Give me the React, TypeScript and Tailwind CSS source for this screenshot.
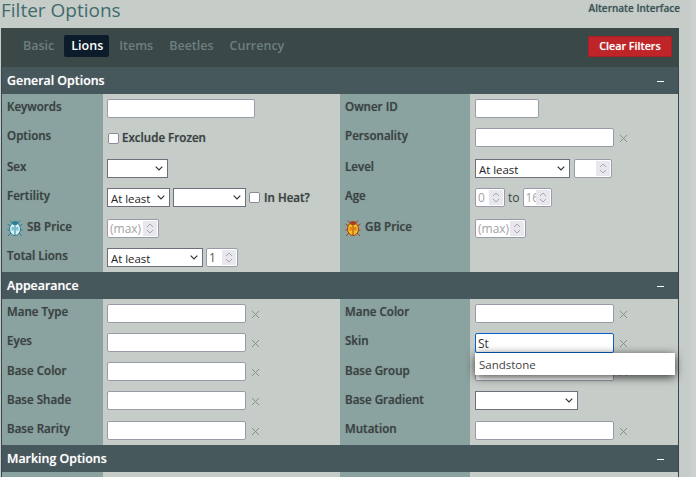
import React from "react";

const inputCls = "block h-[19px] border border-[#9a9aab] rounded-[2px] bg-white text-[12px] px-[2px] outline-none box-border";
const labelText = "text-[11.6px] font-semibold text-[#3a4242] [text-shadow:0_0_1px_rgba(58,66,66,0.55)]";

function Clear() {
  return (
    <svg width="9" height="9" viewBox="0 0 9 9" className="ml-[5px] mt-[6px] shrink-0">
      <path d="M1 1L8 8M8 1L1 8" stroke="#8a8f8d" strokeWidth="1" />
    </svg>
  );
}

function Select({ w, value }: { w: string; value?: string }) {
  return (
    <div className={`relative h-[19px] ${w}`}>
      <select className="block appearance-none w-full h-full border border-[#6e6e7c] bg-white text-[11.4px] text-[#222] pl-[3px] pt-[1px] box-border rounded-none outline-none">
        <option>{value}</option>
      </select>
      <svg width="8" height="5" viewBox="0 0 8 5" className="absolute right-[5px] top-[7px] pointer-events-none">
        <path d="M0.7 0.7L4 4L7.3 0.7" fill="none" stroke="#333" strokeWidth="1.2" />
      </svg>
    </div>
  );
}

function NumberBox({ w, placeholder, value, dark }: { w: string; placeholder?: string; value?: number; dark?: boolean }) {
  return (
    <div className={`relative h-[19px] ${w}`}>
      <input
        type="number"
        placeholder={placeholder}
        defaultValue={value}
        className={`block w-full h-full border border-[#9a9aab] rounded-[2px] bg-white text-[12px] pl-[2px] outline-none box-border placeholder:text-[#a4a4a4] [appearance:textfield] [&::-webkit-inner-spin-button]:appearance-none ${dark ? "text-[#555]" : "text-[#a4a4a4]"}`}
      />
      <span className="absolute right-[2px] top-[2px] bottom-[2px] w-[14px] bg-[#e7e7ed] flex items-center justify-center">
        <svg width="8" height="11" viewBox="0 0 8 11">
          <path d="M1 4L4 1L7 4M1 7L4 10L7 7" fill="none" stroke="#a6a6ae" strokeWidth="1" />
        </svg>
      </span>
    </div>
  );
}

function Check() {
  return <input type="checkbox" className="block m-0 w-[11px] h-[11px] appearance-none bg-white border border-[#8a8a9a] rounded-[2px] shrink-0" />;
}

function Beetle({ body, edge, spot }: { body: string; edge: string; spot: string }) {
  return (
    <svg width="16" height="18" viewBox="0 0 16 18" className="shrink-0 mt-[1px]">
      <g stroke={edge} strokeWidth="1" fill="none">
        <path d="M5 4L3 1.5M11 4L13 1.5M3.5 7L0.5 5M12.5 7L15.5 5M3 11H0.5M13 11H15.5M4 14L1 17M12 14L15 17" />
      </g>
      <ellipse cx="8" cy="10" rx="5.5" ry="6.5" fill={body} stroke={edge} />
      <ellipse cx="8" cy="4" rx="3" ry="2" fill={edge} />
      <path d="M8 4V16.5" stroke={edge} />
      <path d="M4.5 8h2.5v3.5H4.5zM9 8h2.5v3.5H9z" fill={spot} />
    </svg>
  );
}

function Header({ title }: { title: string }) {
  return (
    <div className="h-[27px] bg-[#47585c] flex items-center justify-between pl-[5px] pr-[14px] text-white text-[12.4px] font-semibold [text-shadow:0_0_1px_rgba(255,255,255,0.5)]">
      <span className="mt-px">{title}</span>
      <span className="w-[7px] h-px bg-white mt-[2px]" />
    </div>
  );
}

function Row({ h, a, b, c, d, lab = "pt-[4px]" }: { h: string; a: React.ReactNode; b: React.ReactNode; c?: React.ReactNode; d?: React.ReactNode; lab?: string }) {
  return (
    <div className={`grid grid-cols-[101px_237px_130px_208px] ${h}`}>
      <div className={`bg-[#8ba3a0] pl-[5px] ${lab} leading-[18px] ${labelText} flex items-start gap-[4px]`}>{a}</div>
      <div className="pl-[4px] pt-[5px] flex items-start">{b}</div>
      <div className={`bg-[#8ba3a0] pl-[5px] ${lab} leading-[18px] ${labelText} flex items-start gap-[4px]`}>{c}</div>
      <div className="pl-[5px] pt-[5px] flex items-start">{d}</div>
    </div>
  );
}

const TextWithClear = ({ w = "w-[139px]" }: { w?: string }) => (
  <>
    <input className={`${inputCls} ${w}`} />
    <Clear />
  </>
);

export default function App() {
  return (
    <div className="relative h-[477px] w-[696px] overflow-hidden bg-[#c6ccc8] font-['Open_Sans',sans-serif]">
      <div className="absolute right-0 top-0 bottom-0 w-[5px] bg-[#cdd2cf]" />
      <div className="flex justify-between h-[28px] pl-[1px] pr-[16px]">
        <h1 className="text-[19px] leading-[20px] font-normal text-[#3f6b6e]">Filter Options</h1>
        <a className="text-[10px] font-semibold text-[#3c5458] leading-[17px] [text-shadow:0_0_1px_rgba(60,84,88,0.5)]">Alternate Interface</a>
      </div>
      <div className="ml-[1px] w-[678px] border-l border-r border-[#3a4450] box-border">
        <div className="h-[39px] bg-[#3a4848] -mx-px flex items-center justify-between pl-[17px] pr-[7px]">
          <div className="flex items-center text-[12.5px] font-semibold text-[#6c8080] -mt-[3px]">
            <span className="px-[5px]">Basic</span>
            <span className="ml-[5px] pl-[7px] pr-[6px] h-[22px] leading-[21px] rounded-[2px] bg-[#0c1c2a] text-white">Lions</span>
            <span className="ml-[6px] px-[4px]">Items</span>
            <span className="ml-[8px] px-[4px]">Beetles</span>
            <span className="ml-[8px] px-[4px]">Currency</span>
          </div>
          <button className="w-[84px] h-[21px] -mt-[3px] bg-[#bf2528] border border-[#a82025] text-white text-[10.7px] font-semibold [text-shadow:0_0_1px_rgba(255,255,255,0.5)]">Clear Filters</button>
        </div>
        <Header title="General Options" />
        <Row h="h-[29px]" a="Keywords" b={<input className={`${inputCls} w-[148px]`} />} c="Owner ID" d={<input className={`${inputCls} w-[64px]`} />} />
        <Row
          h="h-[31px]"
          a="Options"
          b={
            <label className={`flex items-center gap-[3px] leading-[18px] ${labelText} mt-[1px] ml-[1px]`}>
              <Check />
              Exclude Frozen
            </label>
          }
          c="Personality"
          d={<TextWithClear />}
        />
        <Row
          h="h-[29px]"
          a="Sex"
          b={<Select w="w-[61px]" />}
          c="Level"
          d={
            <div className="flex gap-[4px]">
              <Select w="w-[95px]" value="At least" />
              <NumberBox w="w-[38px]" />
            </div>
          }
        />
        <Row
          h="h-[31px]"
          a="Fertility"
          b={
            <div className="flex items-center gap-[3px]">
              <Select w="w-[63px]" value="At least" />
              <Select w="w-[73px]" />
              <Check />
              <span className={`${labelText} ml-px`}>In Heat?</span>
            </div>
          }
          c="Age"
          d={
            <div className="flex items-center gap-[3px] text-[12px] text-[#3a4242]">
              <NumberBox w="w-[30px]" value={0} />
              <span>to</span>
              <NumberBox w="w-[29px]" value={16} />
            </div>
          }
        />
        <Row
          h="h-[29px]"
          a={<><Beetle body="#d8eef2" edge="#2a7f98" spot="#7cc4d4" /><span>SB Price</span></>}
          b={<NumberBox w="w-[52px]" placeholder="(max)" />}
          c={<><Beetle body="#f0c020" edge="#a8401c" spot="#e88020" /><span>GB Price</span></>}
          d={<NumberBox w="w-[51px]" placeholder="(max)" />}
        />
        <Row
          h="h-[29px]"
          a="Total Lions"
          b={
            <div className="flex gap-[3px]">
              <Select w="w-[96px]" value="At least" />
              <NumberBox w="w-[32px]" value={1} dark />
            </div>
          }
          c=""
          d=""
        />
        <Header title="Appearance" />
        <Row h="h-[29px]" a="Mane Type" b={<TextWithClear />} c="Mane Color" d={<TextWithClear />} />
        <Row
          h="h-[29px]"
          a="Eyes"
          b={<TextWithClear />}
          c="Skin"
          d={
            <div className="relative flex items-start">
              <input defaultValue="St" className="block h-[20px] w-[139px] border border-[#0a62c8] rounded-[2px] bg-white text-[12px] text-[#333] px-[2px] outline-none box-border" />
              <Clear />
              <div className="absolute left-0 top-[20px] w-[200px] h-[22px] bg-white z-10 pl-[4px] text-[11.5px] leading-[23px] text-[#444] shadow-[0_2px_10px_rgba(0,0,0,0.75)]">
                Sandstone
              </div>
            </div>
          }
        />
        <Row h="h-[29px]" lab="pt-[5px]" a="Base Color" b={<TextWithClear />} c="Base Group" d={<TextWithClear />} />
        <Row h="h-[30px]" lab="pt-[5px]" a="Base Shade" b={<TextWithClear />} c="Base Gradient" d={<Select w="w-[103px]" />} />
        <Row h="h-[29px]" a="Base Rarity" b={<TextWithClear />} c="Mutation" d={<TextWithClear />} />
        <Header title="Marking Options" />
        <Row h="h-[29px]" a="" b="" c="" d="" />
      </div>
    </div>
  );
}
